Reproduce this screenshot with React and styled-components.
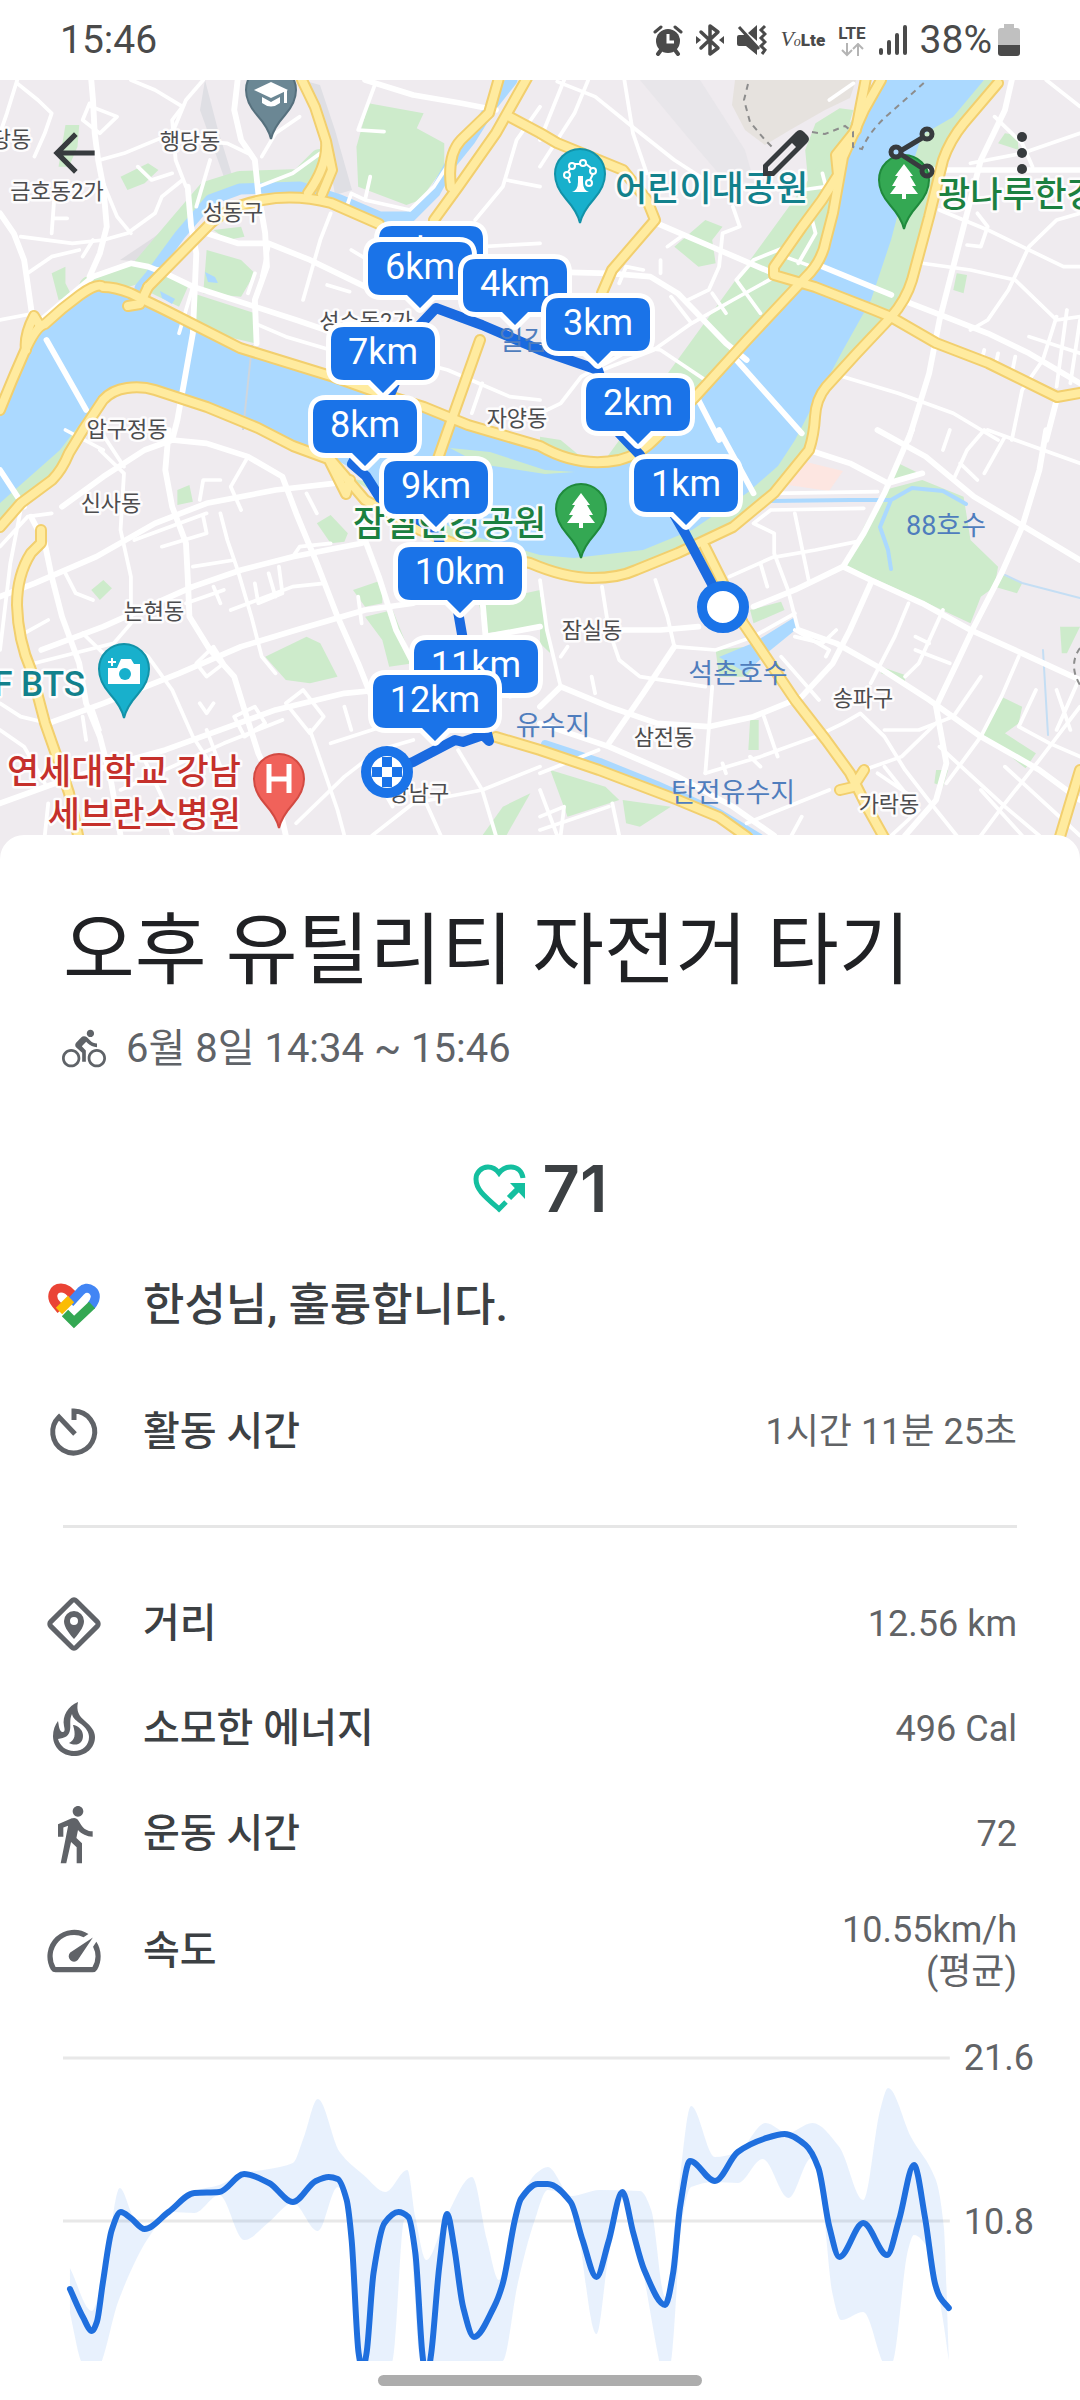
import React from 'react'
import styled, { createGlobalStyle } from 'styled-components';
import { MdArrowBack, MdDirectionsBike, MdDirectionsWalk, MdSpeed } from 'react-icons/md';

const GlobalStyle = createGlobalStyle`
    * {
        box-sizing:border-box;
    }
    body {
        margin:0;
        background-color:#fff;
        font-family:Roboto, 'Noto Sans CJK KR', sans-serif;
    }
`

/* ---------- status bar ---------- */

const StatusBar = styled.div`
    display:flex;
    align-items:center;
    justify-content:space-between;
    height:80px;
    padding:0 60px;
    color:#4a4a4a;
    font-size:39px;
    line-height:48px;
`
const StatusIcons = styled.div`
    display:flex;
    align-items:center;
    gap:13px;
`
const Battery = styled.span`
    display:flex;
    align-items:center;
    gap:6px;
`
const VoLte = styled.span`
    display:flex;
    align-items:baseline;
    font-family:'Liberation Serif', serif;
    font-size:22px;
    font-style:italic;
    line-height:28px;

    small {
        font-size:14px;
    }
    b {
        font-family:Roboto, sans-serif;
        font-size:17px;
        font-style:normal;
        font-weight:900;
    }
`
const Network = styled.span`
    display:flex;
    flex-direction:column;
    align-items:center;
    font-size:17px;
    font-weight:700;
    line-height:20px;
`

function StatusBarRow() {
  return (
    <StatusBar>
        <span>15:46</span>
        <StatusIcons>
            <svg width="30" height="32" viewBox="0 0 30 32" fill="none" stroke="#4a4a4a">
                <circle cx="15" cy="17" r="12" fill="#4a4a4a" stroke="none" />
                <path d="M2 8L8 3M28 8L22 3" strokeWidth="3" strokeLinecap="round" />
                <path d="M8 26L5 30M22 26L25 30" strokeWidth="4" strokeLinecap="round" />
                <path d="M15 10V18H21" stroke="#fff" strokeWidth="3" />
            </svg>
            <svg width="28" height="34" viewBox="0 0 28 34" fill="none" stroke="#4a4a4a" strokeWidth="3.500" strokeLinejoin="round">
                <path d="M5 9L22 25L14 31V3L22 9L5 25" strokeLinecap="round" />
                <path d="M0 13L5 17L0 21ZM28 13L23 17L28 21Z" fill="#4a4a4a" stroke="none" />
            </svg>
            <svg width="30" height="32" viewBox="0 0 30 32" fill="none" stroke="#4a4a4a">
                <path d="M0 13Q0 11 2 11H8L20 23V31L9 22H2Q0 22 0 20ZM11 9L20 1V17Z" fill="#4a4a4a" stroke="none" />
                <path d="M2 3L22 25" strokeWidth="3" />
                <path d="M28 2L24 6L28 10L24 14L28 18L24 22L28 26L25 30" strokeWidth="3" />
            </svg>
            <VoLte>V<small>o</small><b>Lte</b></VoLte>
            <Network>
                LTE
                <svg width="24" height="14" viewBox="0 0 24 14" fill="none">
                    <path d="M7 0V12M2 7L7 12L12 7M18 13V1M13 6L18 1L23 6" stroke="#b4b4b4" strokeWidth="2" />
                </svg>
            </Network>
            <svg width="28" height="32" viewBox="0 0 28 32" stroke="#4a4a4a" strokeWidth="4" strokeLinecap="round">
                <path d="M2 26V29M10 18V29M18 11V29M26 3V29" />
            </svg>
            <Battery>
                38%
                <svg width="22" height="34" viewBox="0 0 22 34">
                    <path d="M6 1H16V5H19Q22 5 22 8V22H0V8Q0 5 3 5H6Z" fill="#c0c0c0" />
                    <path d="M0 22H22V30Q22 33 19 33H3Q0 33 0 30Z" fill="#4a4a4a" />
                </svg>
            </Battery>
        </StatusIcons>
    </StatusBar>
  )
}

/* ---------- map ---------- */

// Four tiles share one unit grid, each is scaled onto its quarter of the map.
const tiles = [
    {
        at: '0 0',
        parks: [
            '1070 310 1230 340 1210 385 1290 430 1290 500 1220 600 1180 615 1040 560 1035 440',
            '600 750 700 780 740 820 700 890 590 880', '560 880 740 940 740 1030 660 1010 560 960',
            '350 530 430 490 460 510 420 550 370 570', '190 375 230 375 225 440 200 500 170 500',
            '150 820 190 800 190 850 210 890 170 900', '450 820 550 850 520 920 440 880', '620 690 700 680 710 710 660 720',
        ],
        major: [
            'M265 240L270 300L275 400L285 480L300 560L310 680L290 760L260 830', 'M0 640L40 700L70 780L80 850L95 960',
            'M460 810L560 860L740 920L860 960L1200 1080', 'M120 960L200 890L270 830L380 790L430 800L480 820', 'M545 560L555 680L570 760L560 1000L515 1260L500 1320',
            'M690 240L680 330L700 420L740 480L750 580L770 700L775 800L740 900L745 1030',
            'M600 700L690 730L780 730L900 780L1060 860', 'M135 1020L250 1230', 'M1060 240L1200 285L1340 310L1440 330',
        ],
        minor: [
            'M50 240L20 340L0 400M50 250L110 300L150 340L130 400L100 470', 'M265 320L340 350L290 400L240 360L260 310',
            'M60 710L210 730L300 720L370 700L450 640L470 590L530 540', 'M290 480L360 460L500 400L540 300L590 240',
            'M380 240L450 270L530 320L500 360L510 480L540 560', 'M750 560L850 520L930 460',
            'M740 970L830 1010L960 1050', 'M960 640L930 720L880 900', 'M1090 250L1040 390L1115 395',
            'M1010 610L1020 580L1060 600L1075 530M1060 600L1190 630L1260 560L1310 480', 'M1568 320L1500 420L1460 560L1380 660',
            'M0 960L100 940', 'M80 820L150 770L230 750M240 770L270 720', 'M160 560L150 700M160 655L195 655',
            'M780 740L760 830M740 820L720 880M950 855L1015 875', 'M1020 750L1060 775M1120 1060L1300 1110L1480 1190L1568 1200',
            'M1400 1150L1370 1240M1568 730L1400 740', 'M300 550L340 650L380 700M400 500L440 540L500 520',
            'M610 480L570 620M540 420L660 430L720 460', 'M1400 480L1360 520M1568 560L1470 540M560 860L520 1000', 'M760 470L800 400L870 350',
        ],
    },
    {
        at: '540 0',
        parks: [
            '390 740 480 660 530 680 500 720 510 790 460 800', '800 370 870 325 910 330 890 400 850 470 840 540 780 560 770 450',
            '700 790 760 790 770 820 700 820', '1330 430 1350 400 1385 405 1390 450', '1210 820 1240 825 1230 880 1200 870',
        ],
        major: [
            'M340 670L520 750L700 830L770 860', 'M0 815L200 820L320 830L400 880L540 1030L600 1080', 'M820 800L1020 885',
            'M570 1080L760 1300', 'M460 1200L520 1320', 'M1370 240L1350 330L1280 480L1240 640L1200 800L1160 960L1130 1120L1070 1320',
            'M1050 900L1200 960L1300 1000L1420 1060L1568 1150', 'M1130 510L1568 510', 'M1500 1200L1470 1320',
        ],
        minor: [
            'M70 240L0 420M140 240L100 340L0 500', 'M50 245L160 290L280 390L390 480L480 540', 'M245 240L270 400L310 520',
            'M560 620L580 680L530 700L520 800L490 870L430 900', 'M370 740L410 710', 'M740 730L620 780L570 840L640 940',
            'M700 820L560 900L440 970L330 1050L180 1110', 'M0 1240L60 1210L120 1130L280 1040L350 1050L480 1140', 'M790 660L800 700L750 790M710 770L790 800',
            'M1250 490L1400 460L1568 400', 'M1320 350L1400 430L1430 500', 'M1160 630L1300 690L1400 740L1520 800L1568 800',
            'M1110 790L1250 810L1380 840L1440 900L1500 960L1568 950', 'M1568 640L1500 660L1420 740L1360 870L1300 960L1250 990',
            'M1500 950L1460 1080L1400 1170L1370 1320', 'M880 1130L1040 1180L1200 1240L1330 1320', 'M1470 240L1568 320',
            'M1270 640L1300 680L1280 740L1240 735', 'M1420 1010L1568 1060M1290 1050L1280 1090M1330 1060L1320 1110M1380 1070L1370 1120',
            'M1530 930L1500 1160M1568 960L1540 1150M230 850L250 800L300 810M350 780L350 820', 'M820 520L830 560L760 570M840 300L910 250',
            'M440 970L380 890M500 880L540 940',
        ],
    },
    {
        at: '0 430',
        parks: [
            '770 680 890 620 930 640 980 740 900 760 830 750', '515 180 550 165 560 215 515 225', '920 280 960 255 1010 310 1000 335 960 340',
            '1060 560 1140 540 1190 670 1200 700 1130 710 1110 630', '265 480 300 450 325 475 290 510', '1025 480 1110 450 1110 520 1060 530',
            '1390 520 1568 480 1568 590 1410 610', '1460 1130 1540 1090 1470 1217 1400 1217', '1330 10 1568 60 1568 115 1450 80 1320 60',
        ],
        major: [
            'M490 0L480 120L500 230L540 340L545 440L550 560L610 660L680 740L710 840L750 970L800 1080L830 1217',
            'M90 260L130 340L150 440L180 560L230 700L250 820L290 920L320 1040L350 1217', 'M0 500L100 460L280 380L450 280L600 220L800 180L970 160',
            'M180 230L300 140L420 60L500 30L600 40L720 80L820 140L860 250L920 400L980 560L1040 700L1090 830',
            'M120 660L300 590L430 530L560 470L700 420L850 380L1050 340', 'M140 880L300 820L520 730L700 650L860 600L1060 540L1200 520',
            'M1060 330L1100 440L1150 600L1200 700', 'M0 120L70 230', 'M1400 500L1410 620L1568 590', 'M0 1120L160 1060L340 1000L480 960L640 900L800 840L1000 790L1100 780',
        ],
        minor: [
            'M290 60L360 130L350 300L380 440L380 580L330 640L100 700', 'M670 540L850 470L940 460', 'M0 820L60 860L140 880',
            'M240 610L310 680L400 660L430 680L500 780L560 920L610 1000', 'M640 250L660 330L690 420L730 560L760 680L800 730',
            'M350 1080L500 1010L650 940L820 870', 'M860 1180L1000 1040L1100 960L1200 930', 'M900 900L940 1020L980 1140L1000 1217',
            'M960 940L1140 880L1240 860', 'M1080 1217L1200 1120L1400 1080L1568 1010', 'M1330 960L1400 1080L1440 1217',
            'M570 700L620 650L650 700L600 740Z', 'M680 860L740 830L770 880L710 920Z', 'M830 820L880 780L940 860L900 910Z',
            'M190 430L220 490L270 510M70 610L140 570', 'M740 460L750 520L820 490L810 410M780 430L800 500M620 470L640 520',
            'M540 520L650 480M560 410L680 390M470 350L600 310L590 260M390 330L600 250', 'M580 210L590 150L640 150M720 80L670 170L700 240',
            'M60 240L30 400L0 660M0 350L80 260L150 250', 'M290 0L360 110M190 0L300 60', 'M920 250L890 190M850 380L870 350L960 340',
            'M0 900L70 950L130 1060M140 1120L130 1217M420 990L470 1100L500 1217', 'M600 900L640 1010M580 820L600 850L620 820',
            'M1220 1080L1280 1217M1090 1040L1140 1130M1000 830L1020 900M1480 800L1560 780', 'M1040 500L1050 580M240 860L250 930M270 840L290 900',
        ],
    },
    {
        at: '540 430',
        parks: [
            '1000 180 1110 150 1230 200 1250 330 1330 410 1320 470 1280 500 1250 580 960 440 890 410 940 290', '1020 150 1040 100 1100 130 1060 150',
            '610 540 700 515 710 540 620 580', '990 710 1060 735 1060 755 990 730', '1340 800 1400 830 1390 880 1350 910 1440 970 1410 1015 1280 910',
            '610 870 635 870 635 960 605 960', '1345 435 1400 460 1385 490 1320 470', '0 500 10 500 30 670 0 640', '30 1020 190 1070 230 1110 80 1160',
            '240 1110 380 1130 290 1190 250 1180', '1510 590 1568 590 1530 670 1515 670', '1150 1020 1185 1020 1170 1070 1145 1060',
            '510 660 600 650 640 680 600 740 520 740', '0 20 60 30 130 90 0 70',
        ],
        major: [
            'M780 60L900 100L1010 160L1110 130', 'M980 0L1120 80L1260 200L1390 280L1568 390',
            'M1470 0L1450 120L1400 290L1340 430L1260 590L1210 700L1150 830L1180 1000L1150 1110L1060 1217', 'M1080 0L1000 190L940 310L880 410',
            'M880 410L960 450L1110 520L1250 600L1400 670L1568 750', 'M620 530L740 480L880 410', 'M750 600L860 640L980 710L1130 810L1280 920L1450 1020L1568 1110',
            'M960 460L900 600L850 700L760 800', 'M0 830L60 770L200 830L340 880L490 890L620 860L740 810', 'M390 650L300 790L200 940', 'M520 0L620 190',
            'M240 600L350 600L460 590', 'M0 880L200 950L400 1040L560 1130L680 1217',
        ],
        minor: [
            'M680 190L980 185M670 240L940 235M670 240L620 280L680 310L680 370L720 480L750 600', 'M690 380L800 360L920 335M740 250L780 450M550 440L680 380M640 400L660 470',
            'M1070 520L1030 620L960 760', 'M1170 540L1100 700L1060 740M1090 620L1130 640M1090 660L1190 700', 'M0 450L20 600L60 770M60 680L80 650',
            'M180 470L200 600L230 690L290 740L480 770', 'M335 450L370 560L390 650L510 660L620 620L740 550', 'M500 770L490 900L480 1030',
            'M480 1030L640 980L800 920L880 880L930 850L1000 920L1060 1020L1150 1140L1210 1217', 'M650 860L690 980M610 980L640 1010M530 1000L540 1030', 'M840 1080L600 1180',
            'M1290 0L1240 60L1200 150M1350 20L1290 130M1190 0L1170 60M1220 100L1270 150', 'M1280 740L1200 860L1100 900L1000 900', 'M1390 680L1340 800L1280 920L1180 1060',
            'M1568 830L1450 990L1350 1120L1280 1217', 'M940 1020L1050 980L1150 880', 'M740 600L840 660L830 680M700 680L810 810M150 740L160 790',
            'M1020 1217L1100 1140L1000 1010M980 1030L1080 1100', 'M1280 1080L1400 1217M1160 950L1350 1130L1450 1217M1350 1010L1568 1217', 'M1300 0L1568 100',
            'M1440 780L1390 890L1480 940L1568 980M1500 780L1540 900M1560 760L1500 900', 'M0 1080L50 1217M0 1160L70 1130L60 1217M210 1120L230 1217',
            'M0 1030L170 960M0 1200L200 1130', 'M740 620L820 640L860 600M730 1217L760 1160',
        ],
    },
]

const river = 'M0 410L24 353L45 324L80 295L103 287L130 293L165 310L240 348L334 377L379 393L424 407L468 425L540 446L578 465L619 460L657 437L695 397L747 340L815 266L833 213L843 157L864 110L881 80H984L953 117L922 135L905 187L891 240L871 300L843 350L809 413L795 440L778 466L747 493L692 530L643 550L574 558L540 555L470 535L400 505L372 480L340 462L293 444L258 428L207 407L155 390L127 390L103 400L83 420L60 450L0 503Z'

const banks = 'M881 80L843 350L800 450L740 520L680 550L592 575L470 550L350 478L540 520L800 440L920 135L984 80H998L964 123L943 160L929 217L912 280L891 317L857 353L826 387L809 450L774 493L733 527L678 553L592 578L530 563Z'

const highways = [
    'M0 410Q12 380 24 353T45 324Q62 308 80 295T103 287Q115 287 130 293L165 310L240 348L334 377L379 393L424 407L468 425L540 446Q578 468 619 460Q640 455 657 437L695 397L747 340L805 278Q822 262 826 240L833 213L843 157L864 110L881 80',
    'M0 527L21 503L52 480Q62 470 69 453L83 430L103 400Q112 390 127 388T155 390L207 407L258 428L293 446L331 460L348 480L365 500L420 530L475 552L530 563Q565 578 592 578T636 570L678 553L733 527L774 493L809 450Q814 435 815 417T826 387L857 353L891 317Q906 300 912 280L929 217L943 160Q950 140 964 123L998 83',
    'M148 287L207 227Q225 207 262 200Q296 194 331 203L379 224',
    'M302 80L315 107L326 141Q328 165 308 193M326 141L332 170L322 194',
    'M527 78L496 133L458 187L434 220M499 78L489 113L461 140Q447 155 451 187',
    'M510 117L540 133L557 143L623 170L647 200L655 220L612 270L602 293',
    'M480 340L448 430L434 470M26 350Q24 335 34 316L40 326M148 287L140 304L128 306',
    'M866 78L856 130L836 155L838 175L822 200L802 227L774 267V275L815 287L874 310L891 317L936 343L988 363L1057 397L1080 393',
    'M41 530V543L31 553Q17 575 17 605Q18 640 31 670L45 723L59 763L69 793L79 840',
    'M496 737L540 750L599 770L678 800L719 817L747 837L760 850',
    'M705 547L743 623L795 700L826 740L850 773L867 807L891 850M840 790L853 787L864 770',
    'M1080 770L1056 850M350 480L346 494L330 462',
]

const Street = styled.path`
    fill:none;
    stroke:#fff;
    stroke-width:${props => (props.$major ? 17 : 11)};
    stroke-linejoin:round;
    stroke-linecap:round;
`
const Line = styled.path`
    fill:none;
    stroke:${props => props.$color};
    stroke-width:${props => props.$width};
    stroke-linejoin:round;
    stroke-linecap:round;
`
const PlaceLabel = styled.text`
    font-family:Roboto, 'Noto Sans CJK KR', sans-serif;
    font-size:${props => props.$size}px;
    font-weight:${props => (props.$strong ? 500 : 400)};
    fill:${props => props.$color};
    stroke:#fff;
    stroke-width:5px;
    stroke-opacity:${props => (props.$plain ? 0 : 0.9)};
    stroke-linejoin:round;
    paint-order:stroke;
    text-anchor:${props => props.$anchor || 'middle'};
`
const MarkerText = styled.text`
    font-family:Roboto, sans-serif;
    font-size:36px;
    fill:#fff;
    text-anchor:middle;
`

const districts = [
    ['당동', 11, 147], ['행당동', 190, 149], ['금호동2가', 57, 199], ['성동구', 233, 220], ['성수동2가', 366, 329],
    ['압구정동', 127, 437], ['자양동', 517, 426], ['신사동', 111, 511], ['논현동', 154, 619], ['잠실동', 592, 638],
    ['송파구', 863, 706], ['삼전동', 664, 745], ['가락동', 889, 812], ['강남구', 419, 801],
]
const waters = [
    ['일감호', 536, 350], ['88호수', 946, 535], ['석촌호수', 738, 683], ['유수지', 553, 735], ['탄전유수지', 733, 802],
]
const places = [
    ['어린이대공원', 615, 201, '#12818c', 'start'], ['광나루한강공원', 938, 207, '#1b8040', 'start'], ['잠실한강공원', 353, 536, '#1b8040', 'start'],
    ['F BTS', 85, 696, '#12818c', 'end'], ['연세대학교 강남', 241, 784, '#c5302b', 'end'], ['세브란스병원', 241, 827, '#c5302b', 'end'],
]

// [distance, tip x, box top], drawn north to south so that nearer ones cover the others
const markers = [
    [5, 431, 226], [6, 420, 242], [4, 515, 259], [3, 598, 298], [7, 383, 327], [2, 638, 378],
    [8, 365, 400], [1, 686, 459], [9, 436, 461], [10, 460, 547], [11, 476, 640], [12, 435, 675],
]

function Pin({ x, y, color, edge, children }) {
  return (
    <g transform={`translate(${x} ${y})`}>
        <path d="M0 -1C-2 -10 -6 -16 -14 -25C-22 -34 -25 -41 -25 -50A25 25 0 0 1 25 -50C25 -41 22 -34 14 -25C6 -16 2 -10 0 -1Z" fill={color} stroke={edge} strokeWidth="2" />
        {children}
    </g>
  )
}

function Tree() {
  return <path d="M0 -66L9 -54H6L12 -44H8L14 -36H2V-31H-2V-36H-14L-8 -44H-12L-6 -54H-9Z" fill="#fff" />
}

function Marker({ km, x, y }) {
  const half = km > 9 ? 62 : 52
  return (
    <g transform={`translate(${x} ${y})`}>
        <path
            d={`M${-half + 13} 0H${half - 13}Q${half} 0 ${half} 13V40Q${half} 53 ${half - 13} 53H13L0 66L-13 53H${-half + 13}Q${-half} 53 ${-half} 40V13Q${-half} 0 ${-half + 13} 0Z`}
            fill="#1a73e8" stroke="#fff" strokeWidth="10" paintOrder="stroke" strokeLinejoin="round"
        />
        <MarkerText y="37">{km}km</MarkerText>
    </g>
  )
}

const MapSvg = styled.svg`
    display:block;
    width:100%;
    height:780px;
    background-color:#efebef;
`

function RouteMap() {
  const layer = (draw) => tiles.map(tile => (
    <g key={tile.at} transform={`translate(${tile.at}) scale(.3444 .3333)`}>{draw(tile)}</g>
  ))
  return (
    <MapSvg viewBox="0 80 1080 780" preserveAspectRatio="xMidYMid slice">
        <path d="M735 80H856L850 98L825 110L790 130L765 145L745 130L732 105Z" fill="#e6e2de" />
        <path d="M640 80L700 80L745 150L755 185L720 175L690 140Z" fill="#e8e6ea" />
        <path d="M302 80L320 85L335 130L352 190L335 195L326 141ZM205 80L218 130L235 185L225 180L200 110Z" fill="#dfdfe4" />
        <path d="M120 260L150 240L185 215L170 240L145 262Z" fill="#e0dee2" />
        <path d="M794 459L843 471L829 491L788 485Z" fill="#fde6e1" />
        {layer(tile => tile.parks.map(points => <polygon key={points} points={points} fill="#cdebcb" />))}
        <Line $color="#cdebcb" $width={22} d="M90 287L140 272L180 225L208 192L240 182L300 180L320 160" />
        <path d={banks} fill="#cdebcb" />
        <path d="M20 484L55 452L83 420L90 430L69 462L30 496L0 520V500Z" fill="#cdebcb" />
        <path d={river} fill="#abd9ff" />
        <path d="M450 448L490 452L545 470L575 472L545 474L480 464Z" fill="#cdebcb" />
        <Line $color="#abd9ff" $width={11} d="M140 288L150 276L180 235L210 200L240 189L300 187L340 200L380 217L410 217L435 192L450 165L470 140L490 108L512 80" />
        <path d="M719 657L753 643L795 617L799 627L767 653L746 673Z" fill="#abd9ff" />
        <path d="M205 272L215 277L218 283L208 282ZM160 291L175 299L172 304L162 298Z" fill="#abd9ff" />
        <Line $color="#abd9ff" $width={4} d="M770 501L850 500L891 500L912 488L943 491L966 504M891 500L880 527L888 550L891 569" />
        <Line $color="#abd9ff" $width={8} d="M545 744L600 762L657 785L719 813L760 838" />
        <Line $color="#c4def4" $width={2} d="M1005 575L1022 583L1080 598M1043 650L1048 735" />
        {layer(tile => tile.minor.map(d => <Street key={d} d={d} />))}
        {layer(tile => tile.major.map(d => <Street key={d} d={d} $major />))}
        <path d="M252 345L243 430" stroke="#cfd6dd" strokeWidth="2" />
        <g>{highways.map(d => <Line key={d} $color="#f2cf6e" $width={12} d={d} />)}</g>
        <g>{highways.map(d => <Line key={d} $color="#ffeb9f" $width={8} d={d} />)}</g>
        <path d="M748 84L744 100L750 122L765 140L773 148M812 132L825 134L845 126L853 132V147L862 149Q870 130 890 113L925 82M1080 648Q1068 665 1080 685" fill="none" stroke="#8d8d8d" strokeWidth="2" strokeDasharray="6 5" />

        <Line $color="#1a6ae0" $width={10} d="M723 605L686 535L640 455L619 433L598 370L540 350L482 325L436 308L420 325L389 397L365 440L352 464L366 476L380 498L436 530L456 600L463 640L489 741L483 735L463 742L455 740L413 762L387 771" />
        <circle cx="723" cy="607" r="21" fill="#fff" stroke="#1a73e8" strokeWidth="10" />
        {districts.map(([name, x, y]) => <PlaceLabel key={name} x={x} y={y} $size={22} $color="#4c4c4e">{name}</PlaceLabel>)}
        {waters.map(([name, x, y]) => <PlaceLabel key={name} x={x} y={y} $size={27} $color="#4f7dbd" $plain>{name}</PlaceLabel>)}
        {places.map(([name, x, y, color, anchor]) => <PlaceLabel key={name} x={x} y={y} $size={35} $color={color} $anchor={anchor} $strong>{name}</PlaceLabel>)}
        <circle cx="387" cy="772" r="26" fill="#1a73e8" />
        <circle cx="387" cy="772" r="16" fill="#fff" />
        <path d="M382 757H392V767H382ZM372 767H382V777H372ZM392 767H402V777H392ZM382 777H392V787H382Z" fill="#1a73e8" />

        <Pin x={271} y={140} color="#6b8794" edge="#56707d">
            <path d="M0 -58L17 -50L0 -42L-17 -50Z" fill="#fff" />
            <path d="M-9 -43L0 -38L9 -43V-37Q0 -30 -9 -37ZM13 -50H16V-37H13Z" fill="#fff" />
        </Pin>
        <Pin x={580} y={224} color="#18b0cc" edge="#1292a8">
            <path d="M-8 -32Q-2 -34 -2 -42V-48H3V-42Q3 -34 9 -32Z" fill="#fff" />
            <g fill="none" stroke="#fff" strokeWidth="2">
                <circle cx="-13" cy="-49" r="3" /><circle cx="-8" cy="-58" r="3" /><circle cx="3" cy="-61" r="3" />
                <circle cx="13" cy="-53" r="3" /><circle cx="9" cy="-41" r="3" /><path d="M-5 -60H0M6 -60L11 -56M-10 -55L-12 -52M13 -50L10 -44M-12 -46L-10 -41" />
            </g>
        </Pin>
        <Pin x={904} y={230} color="#34a853" edge="#1f8a3c"><Tree /></Pin>
        <Pin x={581} y={559} color="#34a853" edge="#1f8a3c"><Tree /></Pin>
        <Pin x={124} y={719} color="#18b0cc" edge="#1292a8">
            <path d="M-16 -35V-51H-7L-3 -60H7L10 -55H16V-35Z" fill="#fff" />
            <circle cx="1" cy="-45" r="6" fill="#18b0cc" />
            <path d="M-12 -61V-53M-16 -57H-8" stroke="#fff" strokeWidth="2" />
        </Pin>
        <Pin x={279} y={829} color="#f0625a" edge="#d24a42">
            <path d="M-10 -65V-36M10 -65V-36M-10 -50H10" stroke="#fff" strokeWidth="5" />
        </Pin>
        {markers.map(([km, x, y]) => <Marker key={km} km={km} x={x} y={y} />)}
    </MapSvg>
  )
}

const MapArea = styled.section`
    position:relative;
`
const Toolbar = styled.header`
    position:absolute;
    top:41px;
    left:0;
    right:0;
    display:flex;
    justify-content:space-between;
    padding:0 42px;
`
const Actions = styled.div`
    display:flex;
    gap:62px;
`
const IconButton = styled.button`
    display:flex;
    align-items:center;
    justify-content:center;
    width:${props => (props.$slim ? 32 : 64)}px;
    height:64px;
    padding:0;
    border:0;
    background:none;
    color:#373b3e;
    cursor:pointer;
`

/* ---------- details sheet ---------- */

const Sheet = styled.main`
    position:relative;
    margin-top:-25px;
    padding-top:67px;
    border-radius:24px 24px 0 0;
    background-color:#fff;
`
const Title = styled.h1`
    margin:0;
    padding:0 63px;
    color:#202124;
    font-size:78px;
    font-weight:400;
    line-height:100px;
`
const Subtitle = styled.p`
    display:flex;
    align-items:center;
    gap:20px;
    margin:19px 0 0;
    padding:0 62px;
    color:#5f6368;
    font-size:40px;
    line-height:56px;
`
const Score = styled.div`
    display:flex;
    align-items:center;
    justify-content:center;
    gap:16px;
    margin-top:76px;
    color:#3c4043;
    font-family:Inter, Roboto, sans-serif;
    font-size:65px;
    font-weight:600;
    line-height:72px;
`
const Row = styled.div`
    display:flex;
    align-items:center;
    gap:37px;
    min-height:${props => (props.$tall ? 130 : 105)}px;
    padding:0 63px 0 42px;
    color:#606368;
`
const Greeting = styled.div`
    padding:16px 0 8px;
`
const IconCell = styled.span`
    display:flex;
    justify-content:center;
    flex:0 0 64px;
`
const Message = styled.p`
    margin:0;
    color:#3c4043;
    font-size:45px;
    font-weight:500;
    line-height:60px;
`
const List = styled.dl`
    margin:0;
`
const Name = styled.dt`
    flex:1;
    color:#3c4043;
    font-size:40px;
    font-weight:500;
    line-height:56px;
`
const Value = styled.dd`
    margin:0;
    color:#616366;
    font-size:36px;
    line-height:42px;
    text-align:right;
`
const Divider = styled.hr`
    height:3px;
    margin:41px 63px 43px;
    border:0;
    background-color:#e6e6e6;
`

function Metric({ icon, name, tall, children }) {
  return (
    <Row $tall={tall}>
        <IconCell>{icon}</IconCell>
        <Name>{name}</Name>
        <Value>{children}</Value>
    </Row>
  )
}

function HeartPointsIcon() {
  return (
    <svg width="54" height="50" viewBox="0 0 54 50" fill="none" stroke="#14bf9f" strokeWidth="5">
        <path d="M50 14C49 7 44 3 38 3C33 3 29 5 26 9C23 5 20 3 15 3C8 3 3 9 3 15C3 25 10 31 26 45L33 38" />
        <path d="M36 34L46 24" strokeWidth="6" />
        <path d="M37 19H52V35Z" fill="#14bf9f" stroke="none" />
    </svg>
  )
}

function FitLogo() {
  return (
    <svg width="52" height="46" viewBox="0 0 52 46" fill="none" strokeWidth="9">
        <path d="M13 27L8 21C2 14 5 5 13 5C18 5 20 7 27 14" stroke="#ea4335" />
        <path d="M22 20L33 8C36 5 40 4 44 7C49 11 48 17 43 23" stroke="#4285f4" />
        <path d="M44 22L26 39L17 30" stroke="#34a853" />
        <path d="M11 28L23 16" stroke="#fbbc04" />
    </svg>
  )
}

function TimerIcon() {
  return (
    <svg width="64" height="64" viewBox="0 0 64 64" fill="none" stroke="#606368" strokeWidth="5">
        <path d="M32 20V11A21 21 0 1 1 17 17L33 34" />
    </svg>
  )
}

function DistanceIcon() {
  return (
    <svg width="64" height="64" viewBox="0 0 64 64">
        <rect x="14" y="14" width="36" height="36" rx="3" transform="rotate(45 32 32)" fill="none" stroke="#606368" strokeWidth="5" />
        <path fillRule="evenodd" d="M32 47C25 39 22 34 22 29A10 10 0 0 1 42 29C42 34 39 39 32 47ZM32 25A4 4 0 1 0 32 33A4 4 0 1 0 32 25Z" fill="#606368" />
    </svg>
  )
}

function FlameIcon() {
  return (
    <svg width="64" height="64" viewBox="0 0 64 64" fill="#606368">
        <path fillRule="evenodd" d="M36 5C34 14 37 19 43 24C49 29 53 34 53 40C53 51 44 59 32 59C20 59 11 50 11 39C11 33 13 28 16 24C17 29 17 33 20 35C23 35 23 33 22 29C20 19 26 9 36 5ZM30 17C27 23 29 28 28 33C27 39 23 41 16 42C18 49 24 54 32 54C41 54 47 48 47 40C47 35 44 31 39 27C35 24 31 22 30 17Z" />
        <path d="M32 28C38 30 41 34 41 39C41 46 35 50 27 46C33 43 34 38 31 28Z" />
    </svg>
  )
}

/* ---------- speed chart ---------- */

const speed = [
    [7, 252], [20, 280], [29, 294], [34, 285], [40, 246], [49, 193], [58, 175], [68, 181], [82, 192], [106, 175], [132, 156],
    [157, 155], [182, 137], [207, 146], [231, 165], [254, 144], [267, 140], [276, 142], [285, 163], [290, 203], [297, 316], [301, 333],
    [305, 316], [312, 236], [323, 186], [337, 175], [347, 180], [354, 216], [361, 316], [365, 343], [370, 316], [378, 230],
    [386, 177], [393, 210], [402, 270], [413, 300], [433, 270], [442, 246], [454, 183], [460, 162], [477, 147], [487, 147],
    [510, 165], [522, 203], [536, 240], [548, 205], [562, 155], [573, 196], [584, 233], [605, 268], [613, 236], [620, 170],
    [630, 124], [655, 144], [678, 115], [704, 102], [725, 97], [746, 108], [759, 131], [770, 190], [780, 220], [804, 186],
    [828, 218], [840, 183], [855, 128], [866, 180], [876, 246], [881, 260], [890, 271],
]
const fastest = [
    [7, 231], [29, 274], [44, 216], [57, 151], [71, 180], [82, 190], [106, 173], [132, 154], [157, 148], [182, 136], [207, 132],
    [231, 126], [242, 100], [256, 62], [278, 115], [302, 138], [324, 155], [346, 133], [354, 180], [365, 223], [385, 180],
    [411, 140], [426, 203], [438, 243], [450, 200], [464, 153], [477, 135], [487, 130], [511, 159], [539, 153], [580, 154],
    [591, 173], [605, 260], [618, 156], [631, 69], [655, 120], [677, 116], [706, 86], [728, 96], [753, 86], [780, 110],
    [804, 163], [821, 73], [829, 51], [852, 100], [877, 143], [885, 190], [890, 321],
]
const slowest = [
    [7, 276], [18, 324], [29, 345], [39, 324], [56, 263], [89, 196], [109, 175], [132, 176], [157, 158], [182, 203], [207, 185],
    [231, 166], [256, 194], [276, 150], [285, 170], [297, 324], [316, 340], [331, 324], [343, 183], [347, 183], [359, 324],
    [385, 345], [442, 324], [457, 246], [474, 183], [487, 153], [511, 165], [536, 297], [548, 220], [562, 163], [580, 223],
    [599, 324], [605, 350], [611, 324], [622, 183], [631, 150], [655, 145], [678, 146], [703, 122], [729, 161], [752, 121],
    [763, 166], [773, 256], [782, 283], [804, 275], [823, 324], [828, 335], [834, 324], [849, 213], [855, 198], [870, 213],
    [883, 276], [890, 323],
]

// Cubic curve through the points that never overshoots a local peak.
function curve(points) {
  const slope = (a, b) => (b[1] - a[1]) / (b[0] - a[0])
  const tangents = points.map((p, i) => {
    if (i === 0) return slope(p, points[1])
    if (i === points.length - 1) return slope(points[i - 1], p)
    const before = slope(points[i - 1], p)
    const after = slope(p, points[i + 1])
    return before * after <= 0 ? 0 : (2 * before * after) / (before + after)
  })
  return points.slice(1).map((p, i) => {
    const prev = points[i]
    const third = (p[0] - prev[0]) / 3
    return `C${prev[0] + third} ${prev[1] + tangents[i] * third} ${p[0] - third} ${p[1] - tangents[i + 1] * third} ${p[0]} ${p[1]}`
  }).join('')
}

const Chart = styled.div`
    display:flex;
    gap:11px;
    margin-top:21px;
    padding:0 46px 0 63px;
`
const ChartSvg = styled.svg`
    display:block;
    flex:1;
    min-width:0;
    height:324px;
`
const Axis = styled.div`
    display:flex;
    flex-direction:column;
    gap:122px;
    color:#616366;
    font-size:36px;
    line-height:42px;
`

function SpeedChart() {
  const lower = [...slowest].reverse()
  return (
    <Chart>
        <ChartSvg viewBox="0 0 894 324" preserveAspectRatio="none" role="img" aria-label="속도">
            <path d="M0 21H891M0 184H891" stroke="#e8e8e8" strokeWidth="3" />
            <path d={`M7 231${curve(fastest)}L890 323${curve(lower)}Z`} fill="#1a73e8" fillOpacity="0.1" />
            <Line $color="#1f6fde" $width={6} d={`M7 252${curve(speed)}`} />
        </ChartSvg>
        <Axis>
            <span>21.6</span>
            <span>10.8</span>
        </Axis>
    </Chart>
  )
}

const NavBar = styled.div`
    display:flex;
    justify-content:center;
    padding:14px 0;
`
const NavHandle = styled.span`
    width:30%;
    height:11px;
    border-radius:6px;
    background-color:#adadad;
`

function App() {
  return (
    <>
        <GlobalStyle />
        <StatusBarRow />
        <MapArea>
            <RouteMap />
            <Toolbar>
                <IconButton aria-label="뒤로"><MdArrowBack size={62} /></IconButton>
                <Actions>
                    <IconButton aria-label="수정">
                        <svg width="48" height="48" viewBox="0 0 48 48" fill="currentColor">
                            <path fillRule="evenodd" d="M1 47V36L34 3Q38 -1 42 3L45 6Q49 10 45 14L12 47ZM6 42H10L34 18L30 14L6 38Z" />
                        </svg>
                    </IconButton>
                    <IconButton aria-label="공유">
                        <svg width="48" height="56" viewBox="0 0 48 56" fill="none" stroke="currentColor" strokeWidth="5">
                            <path d="M14 25L34 13M14 30L34 43" />
                            <circle cx="8" cy="27" r="5" /><circle cx="39" cy="9" r="5" /><circle cx="39" cy="46" r="5" />
                        </svg>
                    </IconButton>
                    <IconButton $slim aria-label="더보기">
                        <svg width="12" height="44" viewBox="0 0 12 44" fill="currentColor">
                            <circle cx="6" cy="6" r="5" /><circle cx="6" cy="22" r="5" /><circle cx="6" cy="38" r="5" />
                        </svg>
                    </IconButton>
                </Actions>
            </Toolbar>
        </MapArea>
        <Sheet>
            <Title>오후 유틸리티 자전거 타기</Title>
            <Subtitle><MdDirectionsBike size={44} />6월 8일 14:34 ~ 15:46</Subtitle>
            <Score><HeartPointsIcon />71</Score>
            <Greeting>
                <Row $tall>
                    <IconCell><FitLogo /></IconCell>
                    <Message>한성님, 훌륭합니다.</Message>
                </Row>
            </Greeting>
            <List>
                <Metric icon={<TimerIcon />} name="활동 시간">1시간 11분 25초</Metric>
            </List>
            <Divider />
            <List>
                <Metric icon={<DistanceIcon />} name="거리">12.56 km</Metric>
                <Metric icon={<FlameIcon />} name="소모한 에너지">496 Cal</Metric>
                <Metric icon={<MdDirectionsWalk size={64} />} name="운동 시간">72</Metric>
                <Metric icon={<MdSpeed size={64} />} name="속도" tall>10.55km/h<br />(평균)</Metric>
            </List>
            <SpeedChart />
        </Sheet>
        <NavBar><NavHandle /></NavBar>
    </>
  )
}

export default App
